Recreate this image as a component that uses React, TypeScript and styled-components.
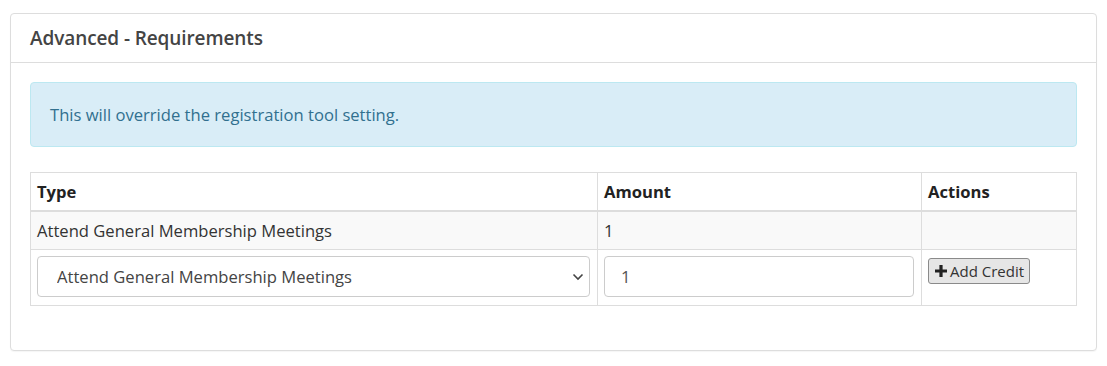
import React from "react";
import styled, { createGlobalStyle } from "styled-components";

const Global = createGlobalStyle`
  html, body { margin: 0; padding: 0; background: #fff; }
  body { font-family: "Open Sans", "Noto Sans", sans-serif; color: #333; }
  * { box-sizing: border-box; }
`;

const Page = styled.div`
  padding: 13px 10px 15px 10px;
`;

const Panel = styled.section`
  border: 1px solid #dddddd;
  border-radius: 4px;
  background: #fff;
  box-shadow: 0 1px 1px rgba(0, 0, 0, 0.04);
`;

const PanelHeading = styled.div`
  height: 49px;
  display: flex;
  align-items: center;
  padding: 0 19px;
  border-bottom: 1px solid #dddddd;
`;

const PanelTitle = styled.h3`
  margin: 0;
  font-size: 19px;
  font-weight: 600;
  color: #444;
  letter-spacing: -0.1px;
`;

const PanelBody = styled.div`
  padding: 19px 19px 44px 19px;
`;

const Alert = styled.div`
  height: 65px;
  display: flex;
  align-items: center;
  padding: 0 19px;
  margin-bottom: 25px;
  background: #d9edf7;
  border: 1px solid #bce8f1;
  border-radius: 4px;
  color: #31708f;
  font-size: 16.6px;
`;

const Table = styled.table`
  width: 100%;
  border-collapse: collapse;
  font-size: 16.6px;
  color: #333;
`;

const Th = styled.th<{ $w?: number }>`
  text-align: left;
  font-weight: 700;
  color: #222;
  height: 38px;
  padding: 0 6px;
  border: 1px solid #dddddd;
  border-bottom: 2px solid #dddddd;
  width: ${(p) => (p.$w ? `${p.$w}px` : "auto")};
`;

const Row = styled.tr<{ $striped?: boolean }>`
  background: ${(p) => (p.$striped ? "#f9f9f9" : "#fff")};
`;

const Td = styled.td`
  padding: 0 6px;
  height: 39px;
  border: 1px solid #dddddd;
  vertical-align: middle;
`;

const FormTd = styled.td`
  padding: 6px 7px 8px 6px;
  border: 1px solid #dddddd;
  vertical-align: top;
`;

const Select = styled.select`
  width: 100%;
  height: 41px;
  appearance: none;
  -webkit-appearance: none;
  border: 1px solid #cccccc;
  border-radius: 4px;
  background-color: #fff;
  background-image: url("data:image/svg+xml;utf8,<svg xmlns='http://www.w3.org/2000/svg' width='12' height='8' viewBox='0 0 12 8'><path d='M1.5 1.5 L6 6 L10.5 1.5' fill='none' stroke='%23444' stroke-width='1.6'/></svg>");
  background-repeat: no-repeat;
  background-position: right 5px center;
  padding: 0 20px 0 19px;
  font-family: inherit;
  font-size: 16.6px;
  color: #444;
`;

const Input = styled.input`
  width: 100%;
  height: 41px;
  border: 1px solid #cccccc;
  border-radius: 4px;
  padding: 0 16px;
  font-family: inherit;
  font-size: 16.6px;
  color: #555;
`;

const Button = styled.button`
  display: inline-flex;
  align-items: center;
  gap: 3px;
  height: 26px;
  margin-top: 2px;
  padding: 0 5px 0 6px;
  background: #e6e6e6;
  border: 1px solid #8a8a8a;
  border-radius: 3px;
  font-family: inherit;
  font-size: 15px;
  color: #333;
`;

const PlusIcon = () => (
  <svg width="12" height="12" viewBox="0 0 12 12" aria-hidden="true">
    <path d="M4.4 0h3.2v4.4H12v3.2H7.6V12H4.4V7.6H0V4.4h4.4z" fill="#222" />
  </svg>
);

export default function App() {
  return (
    <>
      <Global />
      <Page>
        <Panel>
          <PanelHeading>
            <PanelTitle>Advanced - Requirements</PanelTitle>
          </PanelHeading>
          <PanelBody>
            <Alert>This will override the registration tool setting.</Alert>
            <Table>
              <thead>
                <tr>
                  <Th $w={567}>Type</Th>
                  <Th $w={324}>Amount</Th>
                  <Th>Actions</Th>
                </tr>
              </thead>
              <tbody>
                <Row $striped>
                  <Td>Attend General Membership Meetings</Td>
                  <Td>1</Td>
                  <Td />
                </Row>
                <Row>
                  <FormTd>
                    <Select defaultValue="agmm">
                      <option value="agmm">Attend General Membership Meetings</option>
                    </Select>
                  </FormTd>
                  <FormTd>
                    <Input defaultValue="1" />
                  </FormTd>
                  <FormTd>
                    <Button type="button">
                      <PlusIcon />
                      Add Credit
                    </Button>
                  </FormTd>
                </Row>
              </tbody>
            </Table>
          </PanelBody>
        </Panel>
      </Page>
    </>
  );
}
